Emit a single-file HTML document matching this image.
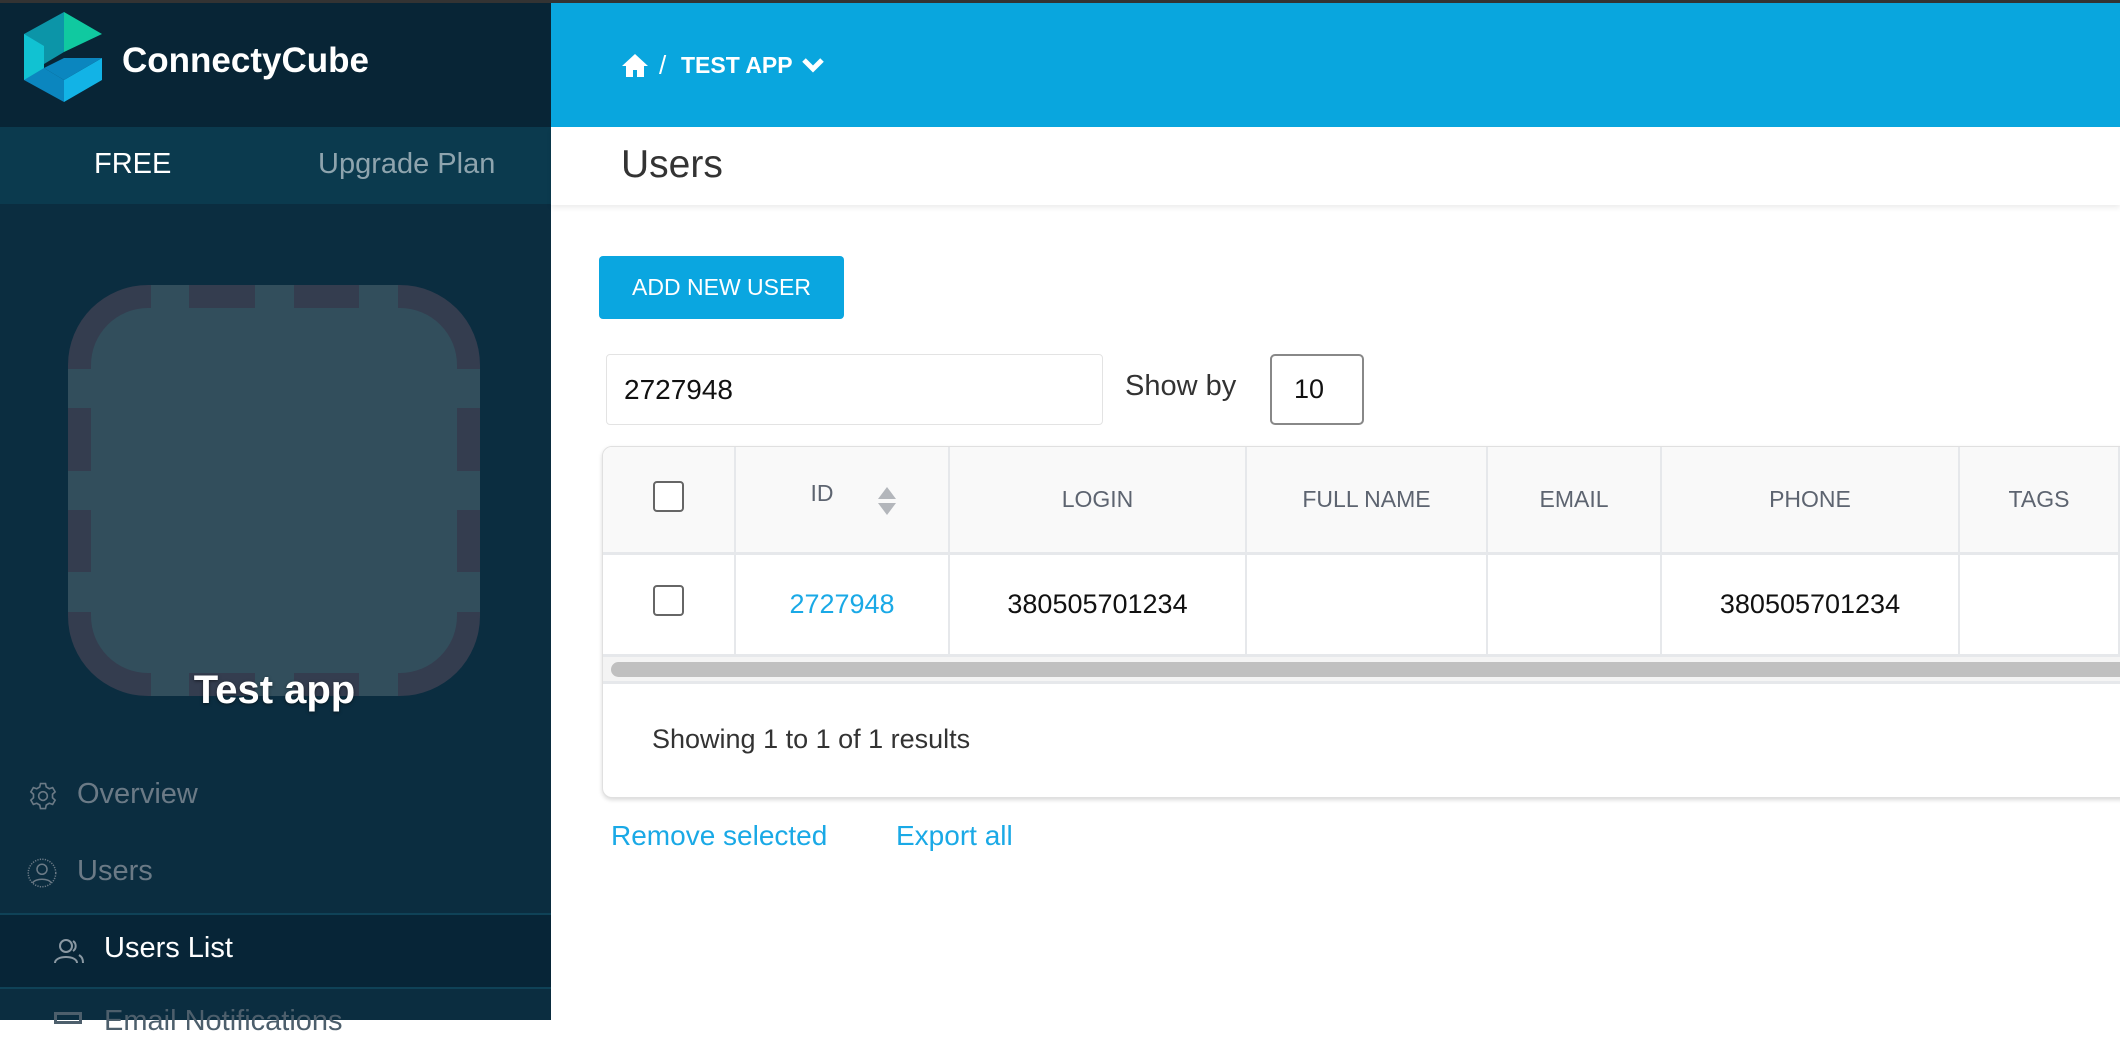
<!DOCTYPE html>
<html><head><meta charset="utf-8"><style>
*{box-sizing:border-box;margin:0;padding:0}
body{width:2120px;height:1020px;overflow:hidden;background:#fff;font-family:"Liberation Sans",sans-serif;position:relative}
.abs{position:absolute}
#topstrip{left:0;top:0;width:2120px;height:3px;background:#333}
#side{left:0;top:0;width:551px;height:1020px;background:#0b2d40}
#logohead{left:0;top:3px;width:551px;height:124px;background:#082536}
#planbar{left:0;top:127px;width:551px;height:77px;background:#0b3a4e}
#topbar{left:551px;top:3px;width:1569px;height:124px;background:#09a6de}
#titlebar{left:551px;top:127px;width:1569px;height:78px;background:#fff;box-shadow:0 3px 5px rgba(0,0,0,.07)}
.white{color:#fff}
th,td{border-right:2px solid #e6e8eb;text-align:center}
.cb{display:inline-block;width:31px;height:31px;border:2px solid #666;border-radius:4px;background:#fff}
</style></head><body>
<div id="side" class="abs"></div>
<div id="logohead" class="abs"></div>
<div id="topstrip" class="abs"></div>
<svg class="abs" style="left:24px;top:12px" width="78" height="90" viewBox="0 0 78 90">
<polygon points="0,22 40,0 40,40 20,52 0,40" fill="#0c95a8"/>
<polygon points="40,0 78,22 40,40" fill="#10c9a0"/>
<polygon points="0,22 20,34 20,68 0,68" fill="#11c2d2"/>
<polygon points="0,68 20,56 40,68 40,90 0,68" fill="#0b86bf"/>
<polygon points="40,68 78,46 78,68 40,90" fill="#12b3e6"/>
<polygon points="20,56 40,46 78,46 40,68" fill="#0b86bf"/>
</svg>
<div class="abs white" style="left:122px;top:41px;font-size:35px;font-weight:bold">ConnectyCube</div>
<div id="planbar" class="abs"></div>
<div class="abs white" style="left:94px;top:148px;font-size:29px">FREE</div>
<div class="abs" style="left:318px;top:148px;font-size:29px;color:#8ea4ae">Upgrade Plan</div>
<svg class="abs" style="left:68px;top:285px" width="412" height="411" viewBox="0 0 412 411">
<rect x="0" y="0" width="412" height="411" rx="80" fill="#343d4f"/>
<rect x="23" y="23" width="366" height="365" rx="57" fill="#324e5c"/>
<g fill="#324e5c">
<rect x="83" y="0" width="38" height="23"/><rect x="187" y="0" width="39" height="23"/><rect x="291" y="0" width="39" height="23"/>
<rect x="83" y="388" width="38" height="23"/><rect x="187" y="388" width="39" height="23"/><rect x="291" y="388" width="39" height="23"/>
<rect x="0" y="84" width="23" height="39"/><rect x="0" y="186" width="23" height="39"/><rect x="0" y="287" width="23" height="40"/>
<rect x="389" y="84" width="23" height="39"/><rect x="389" y="186" width="23" height="39"/><rect x="389" y="287" width="23" height="40"/>
</g>
</svg>
<div class="abs white" style="left:69px;top:668px;width:411px;text-align:center;font-size:40px;font-weight:bold;text-shadow:0 1px 3px rgba(0,0,0,.5)">Test app</div>
<svg class="abs" style="left:28px;top:781px" width="30" height="30" viewBox="0 0 24 24" fill="none" stroke="#6b7a86" stroke-width="1.3"><circle cx="12" cy="12" r="3.5"/><path d="M10 2h4l.6 2.8 2.4 1.4 2.7-.9 2 3.4-2.1 1.9v2.8l2.1 1.9-2 3.4-2.7-.9-2.4 1.4L14 22h-4l-.6-2.8-2.4-1.4-2.7.9-2-3.4 2.1-1.9v-2.8L2.3 8.7l2-3.4 2.7.9 2.4-1.4z"/></svg>
<div class="abs" style="left:77px;top:778px;font-size:29px;color:#6b7a86">Overview</div>
<svg class="abs" style="left:27px;top:858px" width="30" height="30" viewBox="0 0 24 24" fill="none" stroke="#6b7a86" stroke-width="1.2"><circle cx="12" cy="12" r="11" stroke-dasharray="1 1"/><circle cx="12" cy="9" r="4"/><path d="M4.5 20c2-4 13-4 15 0"/></svg>
<div class="abs" style="left:77px;top:855px;font-size:29px;color:#6b7a86">Users</div>
<div class="abs" style="left:0;top:913px;width:551px;height:2px;background:#0f4257"></div>
<div class="abs" style="left:0;top:915px;width:551px;height:72px;background:#072537"></div>
<div class="abs" style="left:0;top:987px;width:551px;height:2px;background:#0f4257"></div>
<svg class="abs" style="left:54px;top:938px" width="30" height="26" viewBox="0 0 30 26" fill="none" stroke="#8a98a2" stroke-width="2"><circle cx="12" cy="8" r="6"/><path d="M1 25c0-8 22-8 22 0"/><path d="M19 3a6 6 0 0 1 0 10M25 17c3 2 4 4 4 8"/></svg>
<div class="abs white" style="left:104px;top:932px;font-size:29px">Users List</div>
<div class="abs" style="left:54px;top:1012px;width:28px;height:12px;border:3px solid #4d5f6c"></div>
<div class="abs" style="left:104px;top:1005px;font-size:29px;color:#4d5f6c">Email Notifications</div>

<div id="topbar" class="abs"></div>
<svg class="abs" style="left:621px;top:53px" width="28" height="25" viewBox="0 0 28 25"><path d="M14 1L1 13h4v11h7v-7h4v7h7V13h4z" fill="#fff"/></svg>
<div class="abs white" style="left:659px;top:50px;font-size:26px">/</div>
<div class="abs white" style="left:681px;top:52px;font-size:23px;font-weight:bold">TEST APP</div>
<svg class="abs" style="left:802px;top:57px" width="22" height="16" viewBox="0 0 22 16"><path d="M2 3l9 9 9-9" stroke="#fff" stroke-width="5" fill="none"/></svg>
<div id="titlebar" class="abs"></div>
<div class="abs" style="left:621px;top:143px;font-size:39px;color:#333">Users</div>

<div class="abs white" style="left:599px;top:256px;width:245px;height:63px;background:#0aa6e0;border-radius:4px;text-align:center;line-height:63px;font-size:23px">ADD NEW USER</div>
<div class="abs" style="left:606px;top:354px;width:497px;height:71px;border:1px solid #e3e3e3;border-radius:4px;font-size:28px;line-height:69px;padding-left:17px;color:#111">2727948</div>
<div class="abs" style="left:1125px;top:370px;font-size:29px;color:#333">Show by</div>
<div class="abs" style="left:1270px;top:354px;width:94px;height:71px;border:2px solid #888;border-radius:5px;font-size:27px;line-height:67px;padding-left:22px;color:#111">10</div>

<div class="abs" style="left:602px;top:446px;width:1530px;height:352px;border:1px solid #e0e0e0;border-radius:10px;box-shadow:0 2px 4px rgba(0,0,0,.15);overflow:hidden;background:#fff">
<table style="border-collapse:collapse;font-size:23px;position:absolute;left:0;top:0;width:1600px">
<tr style="height:106px;background:#f9f9f9;color:#5d6470;border-bottom:3px solid #e6e8eb">
<th style="width:132px;font-weight:normal"><span class="cb"></span></th>
<th style="width:214px;font-weight:normal;position:relative"><span style="position:relative;top:-6px;left:-20px">ID</span><svg style="position:absolute;left:140px;top:38px" width="22" height="32" viewBox="0 0 22 32"><path d="M11 2l9 12H2z" fill="#b3b6bb"/><path d="M11 30l9-12H2z" fill="#b3b6bb"/></svg></th>
<th style="width:297px;font-weight:normal">LOGIN</th>
<th style="width:241px;font-weight:normal">FULL NAME</th>
<th style="width:174px;font-weight:normal">EMAIL</th>
<th style="width:298px;font-weight:normal">PHONE</th>
<th style="width:160px;font-weight:normal">TAGS</th>
<th style="font-weight:normal"></th>
</tr>
<tr style="height:101px;font-size:27px;color:#111">
<td><span class="cb"></span></td>
<td style="color:#1aa9e6">2727948</td>
<td>380505701234</td><td></td><td></td><td>380505701234</td><td></td><td></td>
</tr>
</table>
<div class="abs" style="left:0;top:207px;width:1530px;height:30px;background:#f4f4f4;border-top:3px solid #e6e8eb;border-bottom:3px solid #e6e8eb"></div>
<div class="abs" style="left:8px;top:215px;width:1530px;height:15px;background:#c0c0c0;border-radius:8px"></div>
<div class="abs" style="left:49px;top:277px;font-size:27px;color:#333">Showing 1 to 1 of 1 results</div>
</div>
<div class="abs" style="left:611px;top:820px;font-size:28px;color:#1aa9e6">Remove selected</div>
<div class="abs" style="left:896px;top:820px;font-size:28px;color:#1aa9e6">Export all</div>
</body></html>
